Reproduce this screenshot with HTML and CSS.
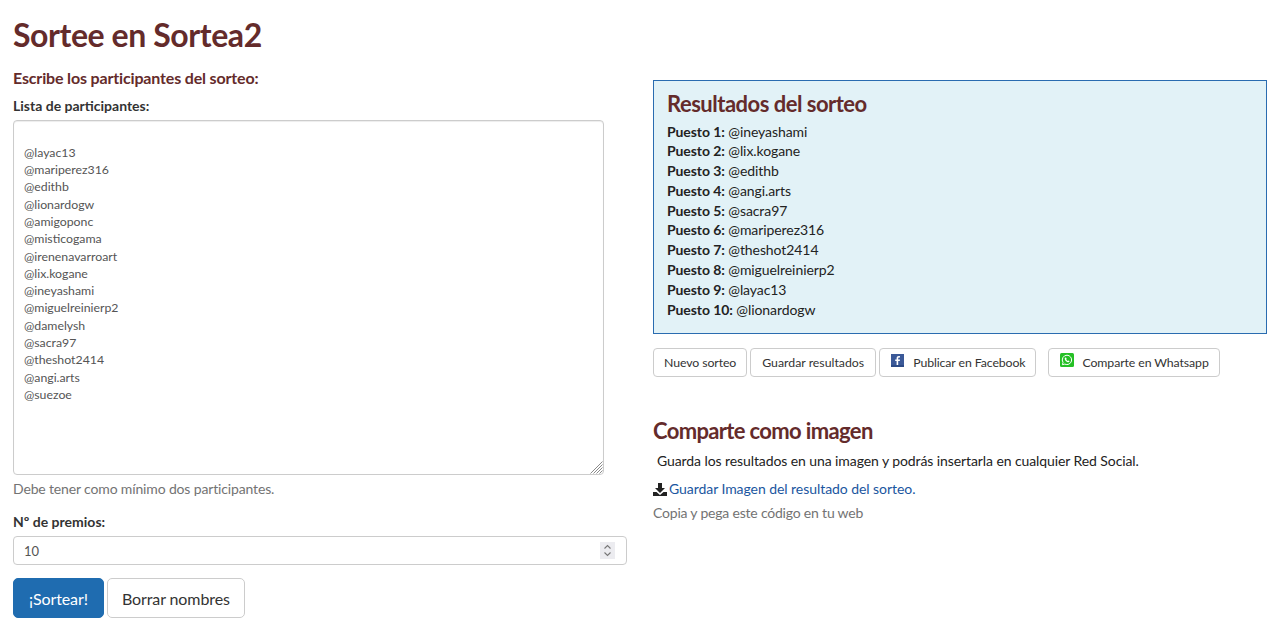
FILE: index.html
```html
<!DOCTYPE html>
<html lang="es">
<head>
<meta charset="utf-8">
<title>Sortea2</title>
<link rel="stylesheet" href="styles.css">
</head>
<body>
<main class="page">
  <h1 class="title">Sortee en Sortea2</h1>
  <div class="columns">
    <section class="left">
      <h2 class="subtitle">Escribe los participantes del sorteo:</h2>
      <label class="label" for="lista">Lista de participantes:</label>
      <div class="list-wrap">
      <textarea class="list" id="lista">

@layac13
@mariperez316
@edithb
@lionardogw
@amigoponc
@misticogama
@irenenavarroart
@lix.kogane
@ineyashami
@miguelreinierp2
@damelysh
@sacra97
@theshot2414
@angi.arts
@suezoe</textarea>
        <svg class="grip" viewBox="0 0 13 13" width="13" height="13"><path d="M0.500 12.500L12.500 0.500M3.500 12.500L12.500 3.500M6.500 12.500L12.500 6.500M9.500 12.500L12.500 9.500" stroke="#8a8a8a" stroke-width="1" fill="none"/></svg>
      </div>
      <p class="hint">Debe tener como mínimo dos participantes.</p>
      <label class="label prizes-label" for="premios">Nº de premios:</label>
      <div class="number-wrap">
        <input class="number" id="premios" type="number" value="10">
        <span class="spin"><svg viewBox="0 0 15 17" width="15" height="17"><path d="M4.500 6.500L7.500 3.500L10.500 6.500M4.500 10.500L7.500 13.500L10.500 10.500" stroke="#777" stroke-width="1.100" fill="none"/></svg></span>
      </div>
      <div class="actions">
        <button class="btn primary">¡Sortear!</button>
        <button class="btn">Borrar nombres</button>
      </div>
    </section>
    <section class="right">
      <div class="results">
        <h3 class="results-title">Resultados del sorteo</h3>
        <ol class="places">
          <li><b>Puesto 1:</b> @ineyashami</li>
          <li><b>Puesto 2:</b> @lix.kogane</li>
          <li><b>Puesto 3:</b> @edithb</li>
          <li><b>Puesto 4:</b> @angi.arts</li>
          <li><b>Puesto 5:</b> @sacra97</li>
          <li><b>Puesto 6:</b> @mariperez316</li>
          <li><b>Puesto 7:</b> @theshot2414</li>
          <li><b>Puesto 8:</b> @miguelreinierp2</li>
          <li><b>Puesto 9:</b> @layac13</li>
          <li><b>Puesto 10:</b> @lionardogw</li>
        </ol>
      </div>
      <div class="share">
        <button class="sbtn">Nuevo sorteo</button>
        <button class="sbtn save">Guardar resultados</button>
        <button class="sbtn icon-btn">
          <svg class="ico" viewBox="0 0 13 13" width="13" height="13"><rect width="13" height="13" fill="#3b5998"/><rect y="11" width="13" height="2" fill="#2c4a86"/><path d="M7.200 11V7H8.800L9 5.400H7.200V4.400C7.200 3.900 7.400 3.600 8 3.600H9V2.200C8.700 2.100 8.300 2.100 7.800 2.100 6.500 2.100 5.600 2.900 5.600 4.200V5.400H4.200V7H5.600V11z" fill="#fff"/></svg>
          Publicar en Facebook
        </button>
        <button class="sbtn icon-btn wa">
          <svg class="ico wa-ico" viewBox="0 0 14 14" width="14" height="14"><rect width="14" height="14" rx="1.500" fill="#25c025"/><path d="M7 2.200a4.700 4.700 0 0 0-4 7.200l-.6 2.300 2.400-.6A4.700 4.700 0 1 0 7 2.200z" fill="none" stroke="#fff" stroke-width="1"/><path d="M5.300 4.600c-.5.400-.7 1-.4 1.800.5 1.300 1.500 2.300 2.800 2.800.8.300 1.400 0 1.800-.6l-.1-.5-1.100-.6-.6.500c-.6-.3-1.200-.9-1.500-1.500l.5-.6-.5-1.200z" fill="#fff"/></svg>
          Comparte en Whatsapp
        </button>
      </div>
      <h3 class="image-title">Comparte como imagen</h3>
      <p class="image-text">Guarda los resultados en una imagen y podrás insertarla en cualquier Red Social.</p>
      <p class="download">
        <svg class="dl" viewBox="0 0 14 13" width="14" height="13"><path d="M5 0h4v5h3L7 10 2 5h3z" fill="#222"/><path d="M0 9h3.500L7 12l3.500-3H14v4H0z" fill="#222"/></svg>
        <a href="#">Guardar Imagen del resultado del sorteo.</a>
      </p>
      <p class="hint copy">Copia y pega este código en tu web</p>
    </section>
  </div>
</main>
</body>
</html>
```

FILE: styles.css
```css
* { box-sizing: border-box; }
html, body { margin: 0; padding: 0; background: #fff; }
body {
  font-family: Lato, "Liberation Sans", sans-serif;
  font-size: 14px;
  line-height: 20px;
  letter-spacing: -0.08px;
  color: #222;
  overflow: hidden;
}
.page { padding: 15px 13px 0; }
.title {
  margin: 0;
  font-size: 32px;
  line-height: 40px;
  font-weight: 700;
  letter-spacing: -0.42px;
  color: #642b2b;
}
.columns {
  display: grid;
  grid-template-columns: 614px 614px;
  column-gap: 26px;
}
.left, .right { min-width: 0; }
.subtitle {
  margin: 13px 0 0;
  font-size: 16px;
  line-height: 20px;
  font-weight: 700;
  letter-spacing: -0.16px;
  color: #642b2b;
}
.label {
  display: block;
  margin-top: 8px;
  font-weight: 700;
  letter-spacing: 0;
  color: #333;
}
.list-wrap { position: relative; width: 591px; margin-top: 4px; }
.list {
  display: block;
  width: 100%;
  height: 355px;
  margin: 0;
  padding: 5.500px 10px;
  border: 1px solid #ccc;
  border-radius: 4px;
  box-shadow: inset 0 1px 1px rgba(0,0,0,.075);
  font: 12.300px/17.300px Lato, "Liberation Sans", sans-serif;
  color: #555;
  outline: none;
  overflow: hidden;
  resize: none;
}
.grip { position: absolute; right: 1px; bottom: 1px; }
.hint { margin: 4px 0 0; color: #737373; letter-spacing: -0.15px; }
.prizes-label { margin-top: 13px; }
.number-wrap { position: relative; margin-top: 4px; }
.number {
  display: block;
  width: 100%;
  height: 29px;
  padding: 4px 10px;
  border: 1px solid #ccc;
  border-radius: 4px;
  font: 13px Lato, "Liberation Sans", sans-serif;
  color: #555;
}
.number::-webkit-inner-spin-button { -webkit-appearance: none; appearance: none; }
.spin {
  position: absolute;
  right: 12px;
  top: 6px;
  display: block;
  width: 15px;
  height: 17px;
  background: #ececf0;
}
.spin svg { display: block; }
.actions { display: flex; gap: 3px; margin-top: 13px; }
.btn {
  height: 40px;
  padding: 0 14px;
  border: 1px solid #ccc;
  border-radius: 5px;
  background: #fff;
  font: 16px Lato, "Liberation Sans", sans-serif;
  letter-spacing: -0.1px;
  color: #333;
}
.btn.primary { background: #1f6cb0; border-color: #1f6cb0; color: #fff; padding: 0 15px; }
.results {
  height: 254px;
  margin-top: 25px;
  padding: 9px 13px;
  background: #e2f2f7;
  border: 1px solid #2a6cb0;
}
.results-title {
  margin: 0;
  font-size: 22px;
  line-height: 28px;
  font-weight: 700;
  letter-spacing: -0.5px;
  color: #642b2b;
}
.places {
  list-style: none;
  margin: 3.500px 0 0;
  padding: 0;
  line-height: 19.800px;
}
.share { display: flex; margin-top: 14px; gap: 3px; align-items: flex-start; }
.sbtn {
  display: block;
  height: 29px;
  padding: 0 10px;
  border: 1px solid #ccc;
  border-radius: 4px;
  background: #fff;
  font: 12.300px Lato, "Liberation Sans", sans-serif;
  letter-spacing: -0.1px;
  color: #333;
  white-space: nowrap;
}
.save { padding: 0 11px; letter-spacing: 0; }
.icon-btn { position: relative; padding-left: 33px; }
.ico { position: absolute; left: 11px; top: 5px; }
.wa { margin-left: 9px; }
.wa-ico { top: 4px; }
.image-title {
  margin: 40px 0 0;
  font-size: 22px;
  line-height: 28px;
  font-weight: 700;
  letter-spacing: -0.65px;
  color: #642b2b;
}
.image-text { margin: 6px 0 0 4px; letter-spacing: -0.09px; }
.download { margin: 8px 0 0; display: flex; align-items: center; gap: 2px; }
.download a { color: #1a56a0; text-decoration: none; letter-spacing: -0.06px; }
.dl { flex: none; }
.copy { margin-top: 4px; letter-spacing: -0.2px; }
```
